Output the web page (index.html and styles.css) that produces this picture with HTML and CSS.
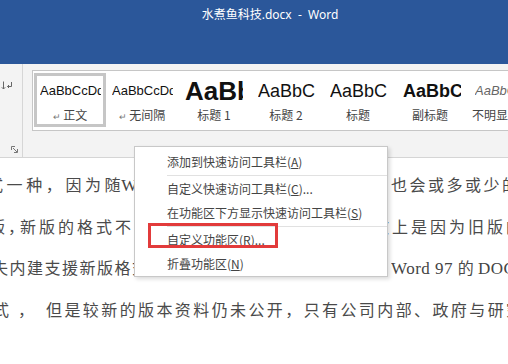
FILE: index.html
```html
<!DOCTYPE html>
<html lang="zh-CN">
<head>
    <meta charset="UTF-8">
    <title>水煮鱼科技.docx - Word</title>
    <link rel="stylesheet" href="styles.css">
</head>
<body>
    <div class="titlebar">
        <div class="title">水煮鱼科技.docx&nbsp; - &nbsp;Word</div>
    </div>

    <div class="ribbon">
        <div class="edge">
            <svg class="para-icon" width="12" height="10" viewBox="0 0 12 10">
                <path d="M2.5 0.5 V8 M0.8 6.3 L2.5 8 L4.2 6.3" fill="none" stroke="#666" stroke-width="1"/>
                <path d="M10.5 1 V5.5 H6.5 M8 4 L6.5 5.5 L8 7" fill="none" stroke="#666" stroke-width="1"/>
            </svg>
            <svg class="launcher" width="7" height="7" viewBox="0 0 7 7">
                <path d="M0.5 4 V0.5 H4" fill="none" stroke="#777" stroke-width="1"/>
                <path d="M2 2 L6 6 M6.5 3 V6.5 H3" fill="none" stroke="#777" stroke-width="1"/>
            </svg>
        </div>
        <div class="vsep"></div>
        <div class="gallery-wrap">
            <div class="gallery">
                <div class="style sel">
                    <div class="preview">AaBbCcDd</div>
                    <div class="label"><span class="ret">↵</span> 正文</div>
                </div>
                <div class="style">
                    <div class="preview">AaBbCcDd</div>
                    <div class="label"><span class="ret">↵</span> 无间隔</div>
                </div>
                <div class="style">
                    <div class="preview h1">AaBbC</div>
                    <div class="label">标题 1</div>
                </div>
                <div class="style">
                    <div class="preview h2">AaBbC</div>
                    <div class="label">标题 2</div>
                </div>
                <div class="style">
                    <div class="preview h2">AaBbC</div>
                    <div class="label">标题</div>
                </div>
                <div class="style">
                    <div class="preview sub">AaBbC</div>
                    <div class="label">副标题</div>
                </div>
                <div class="style">
                    <div class="preview em">AaBbCcDd</div>
                    <div class="label">不明显强调</div>
                </div>
            </div>
        </div>
    </div>

    <div class="doc">
        <div class="line l1">
            <div class="lead">式一种，因为随<span class="en">Word</span>版本的更新而不断变化，</div>
            <div class="tail">也会或多或少的有所差异。</div>
        </div>
        <div class="line l2">
            <div class="lead">版<span class="p">，</span>新版的格式不一定能被旧版程序读取，大</div>
            <div class="tail">致上是因为旧版的程序</div>
        </div>
        <div class="line l3">
            <div class="lead">失内建支援新版格式的功能。例如在</div>
            <div class="tail"><span class="en">Word 97 </span>的<span class="en">DOC</span>格式</div>
        </div>
        <div class="line l4">
            <div class="lead"><span class="c">式</span><span class="p">，</span>但是较新的版本资料仍未公开，只有公司内部、政府与研究机构</div>
        </div>
    </div>

    <div class="menu">
        <div class="mi">添加到快速访问工具栏(<u>A</u>)</div>
        <div class="msep"></div>
        <div class="mi">自定义快速访问工具栏(<u>C</u>)...</div>
        <div class="mi">在功能区下方显示快速访问工具栏(<u>S</u>)</div>
        <div class="msep"></div>
        <div class="mi">自定义功能区(<u>R</u>)...</div>
        <div class="mi">折叠功能区(<u>N</u>)</div>
    </div>
    <div class="mark"></div>
</body>
</html>
```

FILE: styles.css
```css
body {
    margin: 0;
    width: 508px;
    height: 364px;
    overflow: hidden;
    position: relative;
    background-color: #fff;
    font-family: "Noto Sans CJK SC", sans-serif;
}
.titlebar {
    height: 64px;
    background-color: #2b579a;
    color: #fff;
}
.title {
    padding: 7px 0 0 32px;
    text-align: center;
    font-family: "Noto Sans", "Noto Sans CJK SC", sans-serif;
    font-size: 12px;
    line-height: 16px;
}
.ribbon {
    height: 93px;
    background-color: #f3f3f3;
    border-bottom: 1px solid #d5d5d5;
    display: flex;
}
.edge {
    width: 22px;
    display: flex;
    flex-direction: column;
    justify-content: space-between;
    padding: 17px 0 4px 1px;
    box-sizing: border-box;
}
.launcher {
    align-self: flex-end;
    margin-right: 4px;
}
.vsep {
    width: 1px;
    background-color: #d6d6d6;
}
.gallery-wrap {
    flex: 1;
    padding: 6px 0 0 9px;
    overflow: hidden;
}
.gallery {
    height: 57px;
    border: 1px solid #c6c6c6;
    border-right: none;
    background-color: #fff;
    display: flex;
    padding: 2px 0 0 1px;
}
.style {
    flex: none;
    width: 72px;
    height: 54px;
    box-sizing: border-box;
    border: 3px solid transparent;
    overflow: hidden;
}
.style.sel {
    border-color: #c6c6c6;
}
.preview {
    height: 30px;
    line-height: 30px;
    margin: 0 2px 0 3px;
    white-space: nowrap;
    overflow: hidden;
    font-family: "Liberation Sans", Arial, sans-serif;
    font-size: 13px;
    color: #111;
}
.preview.h1 {
    font-size: 26px;
    font-weight: bold;
    margin-left: 4px;
    margin-right: 4px;
}
.preview.h2 {
    font-size: 18px;
    margin-left: 5px;
}
.preview.sub {
    font-size: 18px;
    font-weight: bold;
    margin-left: 6px;
}
.preview.em {
    font-style: italic;
    color: #666;
    margin-left: 6px;
}
.label {
    height: 18px;
    line-height: 18px;
    font-size: 12px;
    color: #444;
    text-align: center;
    white-space: nowrap;
}
.ret {
    font-size: 9px;
    color: #777;
}
.doc {
    padding-top: 6px;
}
.line {
    display: grid;
    grid-template-columns: 391px 1fr;
    height: 41.7px;
    line-height: 41.7px;
    font-size: 16px;
    color: #4a4a4a;
    white-space: nowrap;
}
.lead, .tail {
    overflow: hidden;
}
.en {
    font-family: "Liberation Serif", serif;
    font-size: 17px;
    letter-spacing: 0.5px;
    color: #444;
}
.l1 {
    letter-spacing: 3.6px;
}
.l1 .lead {
    text-indent: -13px;
}
.l1 .tail {
    letter-spacing: 2.5px;
}
.l1 .en {
    margin-left: -3px;
}
.l2 {
    grid-template-columns: 373px 1fr;
    letter-spacing: 3px;
}
.l2 .lead {
    text-indent: -11px;
}
.l2 .p {
    letter-spacing: -4px;
}
.l3 {
    letter-spacing: 1.5px;
}
.l3 .lead {
    text-indent: -8px;
}
.l3 .tail {
    letter-spacing: 4px;
}
.l4 {
    grid-template-columns: 1fr;
    letter-spacing: 2.4px;
}
.l4 .lead {
    text-indent: -7px;
}
.l4 .c {
    letter-spacing: 9px;
}
.l4 .p {
    letter-spacing: 12px;
}
.menu {
    position: absolute;
    left: 134px;
    top: 146px;
    width: 252px;
    padding-top: 3px;
    background-color: #fff;
    border: 1px solid #c8c8c8;
    box-shadow: 2px 2px 4px rgba(0,0,0,0.15);
    font-size: 12px;
    color: #444;
}
.mi {
    height: 24px;
    line-height: 24px;
    padding-left: 32px;
    white-space: nowrap;
}
.msep {
    height: 1px;
    background-color: #e1e1e1;
    margin: 1px 0 1px 32px;
}
.mark {
    position: absolute;
    left: 148px;
    top: 223px;
    width: 124px;
    height: 19px;
    border: 3px solid #e23b3b;
}
```
